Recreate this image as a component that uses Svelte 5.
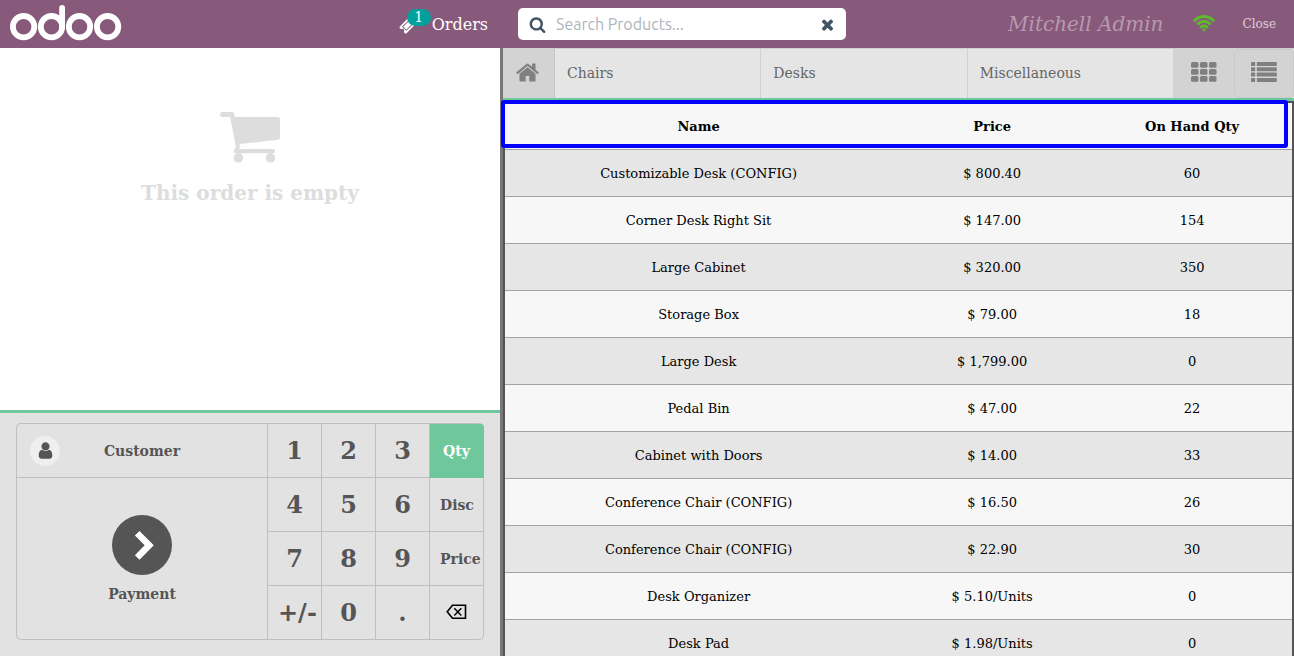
<script>
  const categories = ['Chairs', 'Desks', 'Miscellaneous'];
  const products = [
    ['Customizable Desk (CONFIG)', '$ 800.40', 60],
    ['Corner Desk Right Sit', '$ 147.00', 154],
    ['Large Cabinet', '$ 320.00', 350],
    ['Storage Box', '$ 79.00', 18],
    ['Large Desk', '$ 1,799.00', 0],
    ['Pedal Bin', '$ 47.00', 22],
    ['Cabinet with Doors', '$ 14.00', 33],
    ['Conference Chair (CONFIG)', '$ 16.50', 26],
    ['Conference Chair (CONFIG)', '$ 22.90', 30],
    ['Desk Organizer', '$ 5.10/Units', 0],
    ['Desk Pad', '$ 1.98/Units', 0]
  ];
  const keys = ['1', '2', '3', 'Qty', '4', '5', '6', 'Disc', '7', '8', '9', 'Price', '+/-', '0', '.', 'back'];
  const modes = ['Qty', 'Disc', 'Price'];
  let mode = $state('Qty');
  let search = $state('');
</script>

<div class="pos">
  <header>
    <div class="brand">
      <svg class="logo" width="112" height="38" viewBox="0 0 112 38" role="img" aria-label="odoo">
        <g fill="none" stroke="#fff" stroke-width="5.8" stroke-linecap="round">
          <circle cx="13.6" cy="21.7" r="10.7" /><circle cx="41.5" cy="21.7" r="10.7" />
          <circle cx="69.5" cy="21.7" r="10.7" /><circle cx="97.6" cy="21.7" r="10.7" />
          <path d="M52.1 3v18.7" />
        </g>
      </svg>
      <button class="orders">
        <span class="ticket">
          <svg width="17" height="17" viewBox="0 0 1792 1792" fill="#fff"><path d="M1024 452l316 316-572 572-316-316zm-211 979l618-618q19-19 19-45t-19-45l-362-362q-18-18-45-18t-45 18l-618 618q-19 19-19 45t19 45l362 362q18 18 45 18t45-18zm889-637l-907 908q-37 37-90.500 37t-90.500-37l-126-126q56-56 56-136t-56-136-136-56-136 56l-125-126q-37-37-37-90.500t37-90.500l907-906q37-37 90.500-37t90.500 37l125 125q-56 56-56 136t56 136 136 56 136-56l126 125q37 37 37 90.500t-37 90.500z" /></svg>
          <span class="badge">1</span>
        </span>
        Orders
      </button>
    </div>
    <div class="search">
      <svg width="17" height="17" viewBox="0 0 1792 1792" fill="#435363"><path d="M1216 832q0-185-131.500-316.500t-316.500-131.500-316.500 131.500-131.500 316.500 131.500 316.500 316.500 131.500 316.500-131.500 131.500-316.500zm512 832q0 52-38 90t-90 38q-54 0-90-38l-343-342q-179 124-399 124-143 0-273.500-55.500t-225-150-150-225-55.500-273.500 55.500-273.500 150-225 225-150 273.500-55.500 273.500 55.500 225 150 150 225 55.500 273.500q0 220-124 399l343 343q37 37 37 90z" /></svg>
      <input type="text" aria-label="Search Products" placeholder="Search Products..." bind:value={search} />
      <button aria-label="Clear search" onclick={() => (search = '')}>
        <svg width="17" height="17" viewBox="0 0 1792 1792" fill="#435363"><path d="M1490 1322q0 40-28 68l-136 136q-28 28-68 28t-68-28l-294-294-294 294q-28 28-68 28t-68-28l-136-136q-28-28-28-68t28-68l294-294-294-294q-28-28-28-68t28-68l136-136q28-28 68-28t68 28l294 294 294-294q28-28 68-28t68 28l136 136q28 28 28 68t-28 68l-294 294 294 294q28 28 28 68z" /></svg>
      </button>
    </div>
    <div class="status">
      <span class="user">Mitchell Admin</span>
      <svg width="22" height="17" viewBox="0 0 22 17" fill="none" stroke="#5fb92f" stroke-width="2.800">
        <path d="M.8 6.200Q5 1.500 11 1.500t10.200 4.700M4.200 9.700Q7 6.300 11 6.300t6.800 3.400M7.300 12.900Q9 11 11 11t3.700 1.900" />
        <path d="M8.800 14.200q2.200-1.600 4.400 0L11 16.700z" fill="#5fb92f" stroke="none" />
      </svg>
      <button class="close">Close</button>
    </div>
  </header>

  <main>
    <section class="left">
      <div class="order">
        <svg width="60" height="52" viewBox="0 0 60 52" fill="#ddd">
          <path d="M2.500 0H12q2 0 2.300 2l.6 3H58q2 0 2 2v18.500q0 2-2 2.200L19.500 32l.8 3-1.200 2H53q2.200 0 2.200 2.100T53 41.300H16q-2.200 0-2.200-2 0-1 2-4.500L10.200 5H2.500Q0 5 0 2.500T2.500 0z" />
          <circle cx="18.300" cy="45.800" r="4.800" /><circle cx="50.500" cy="45.800" r="4.800" />
        </svg>
        <h1>This order is empty</h1>
      </div>
      <div class="actions">
        <div class="pad">
          <button class="customer">
            <span class="avatar">
              <svg width="19" height="19" viewBox="0 0 1792 1792" fill="#555"><path d="M1536 1399q0 109-62.500 187t-150.500 78h-854q-88 0-150.500-78t-62.500-187q0-85 8.500-160.500t31.500-152 58.500-131 94-89 134.500-34.500q131 128 313 128t313-128q76 0 134.500 34.500t94 89 58.500 131 31.500 152 8.500 160.500zm-256-887q0 159-112.500 271.500t-271.500 112.500-271.500-112.500-112.500-271.500 112.500-271.500 271.500-112.500 271.500 112.500 112.500 271.500z" /></svg>
            </span>
            <span>Customer</span>
          </button>
          <button class="payment">
            <span class="arrow">
              <svg width="60" height="60" viewBox="0 0 60 60" fill="none" stroke="#fff" stroke-width="6.500"><path d="M25.200 18.200 37.200 30.300 25.200 42.500" /></svg>
            </span>
            <span>Payment</span>
          </button>
          <div class="keys">
            {#each keys as key}
              {#if modes.includes(key)}
                <button class="mode" class:selected={mode === key} onclick={() => (mode = key)}>{key}</button>
              {:else if key === 'back'}
                <button aria-label="Backspace">
                  <svg width="21" height="18" viewBox="0 0 21 18" fill="none" stroke="#000"><path stroke-width="1.600" d="M6.500 1.300h13v13h-13L1.200 7.800z" /><path stroke-width="1.500" d="m8.300 4.200 7 7.200m0-7.200-7 7.200" /></svg>
                </button>
              {:else}
                <button>{key}</button>
              {/if}
            {/each}
          </div>
        </div>
      </div>
    </section>

    <section class="right">
      <nav>
        <button class="home" aria-label="Home">
          <svg width="25" height="25" viewBox="0 0 1792 1792" fill="#808080"><path d="M1472 992v480q0 26-19 45t-45 19h-384v-384h-256v384h-384q-26 0-45-19t-19-45v-480q0-1 .5-3t.5-3l575-474 575 474q1 2 1 6zm223-69l-62 74q-8 9-21 11h-3q-13 0-21-7l-692-577-692 577q-12 8-24 7-13-2-21-11l-62-74q-8-10-7-23.500t11-21.500l719-599q32-26 76-26t76 26l244 204v-195q0-14 9-23t23-9h192q14 0 23 9t9 23v408l219 182q10 8 11 21.500t-7 23.500z" /></svg>
        </button>
        {#each categories as category}
          <button class="category">{category}</button>
        {/each}
        <button class="view" aria-label="Grid view">
          <svg width="26" height="20" viewBox="0 0 26 20" fill="#808080">
            {#each [0, 7, 14] as y}
              {#each [0, 9, 18] as x}<rect {x} {y} width="7.500" height="5.700" rx="1.500" />{/each}
            {/each}
          </svg>
        </button>
        <button class="view framed" aria-label="List view">
          <svg width="26" height="20" viewBox="0 0 26 20" fill="#808080">
            {#each [0, 5.3, 10.6, 15.9] as y}
              <rect x="0" {y} width="4.200" height="4" rx=".6" /><rect x="5.800" {y} width="20" height="4" rx=".6" />
            {/each}
          </svg>
        </button>
      </nav>
      <div class="list">
        <table>
          <thead>
            <tr><th class="name">Name</th><th>Price</th><th>On Hand Qty</th></tr>
          </thead>
          <tbody>
            {#each products as [name, price, quantity]}
              <tr><td>{name}</td><td>{price}</td><td>{quantity}</td></tr>
            {/each}
          </tbody>
        </table>
        <div class="highlight"></div>
      </div>
    </section>
  </main>
</div>

<style>
  :global(body) { margin: 0; }
  .pos, .pos * { box-sizing: border-box; }
  .pos {
    display: flex;
    flex-direction: column;
    height: 100vh;
    overflow: hidden;
    font-family: "DejaVu Serif", serif;
    font-size: 14px;
    color: #555;
  }
  button { border: 0; padding: 0; background: none; font: inherit; color: inherit; cursor: pointer; }
  svg { display: block; flex: none; }

  header { display: flex; align-items: center; flex: none; height: 48px; background: #875a7b; }
  .brand { display: flex; justify-content: space-between; width: 518px; padding: 0 30px 0 10px; }
  .orders { display: flex; align-items: center; gap: 16px; font-size: 16px; color: #fff; }
  .ticket { position: relative; padding-top: 3px; }
  .badge {
    position: absolute; left: 8px; top: -5px; width: 24px; height: 17px;
    border-radius: 9px; background: #00a09d; font-size: 14px; line-height: 17px; text-align: center;
  }
  .search { display: flex; align-items: center; gap: 10px; width: 328px; height: 32px; padding: 0 10px 0 11px; border-radius: 5px; background: #fff; }
  .search input { flex: 1; min-width: 0; padding: 0; border: 0; outline: 0; background: none; font: 16px/20px Ubuntu, "Noto Sans", sans-serif; color: #435363; }
  .search input::placeholder { color: #adb5bd; opacity: 1; }
  .status { display: flex; align-items: center; margin-left: auto; padding-right: 18px; }
  .user { margin-right: 30px; font-size: 20px; font-style: italic; color: #b799af; }
  .status svg { margin-bottom: 2px; }
  .close { margin-left: 27px; font-size: 12px; color: #dccfd8; }

  main { display: flex; flex: 1; min-height: 0; }
  .left { display: flex; flex-direction: column; flex: 0 0 503px; border-right: 3px solid #777; background: #fff; }
  .order { flex: 1; display: flex; flex-direction: column; align-items: center; gap: 17px; padding-top: 64px; }
  h1 { margin: 0; font-size: 20px; line-height: 24px; color: #ddd; }
  .actions { padding: 10px 16px 16px; border-top: 3px solid #6ec89b; background: #e2e2e2; }
  .pad {
    display: grid; grid-template-columns: 1fr 216px; grid-template-rows: 54px 162px;
    border: solid #bfbfbf; border-width: 1px 0 0 1px; border-radius: 5px; font-weight: bold;
  }
  .pad button { border: solid #bfbfbf; border-width: 0 1px 1px 0; }
  .customer { display: flex; align-items: center; padding: 0 13px; }
  .customer > span:last-child { flex: 1; padding-right: 30px; text-align: center; }
  .avatar { display: grid; place-items: center; width: 30px; height: 30px; border-radius: 50%; background: #efefef; }
  .payment { grid-row: 2; display: flex; flex-direction: column; align-items: center; justify-content: center; gap: 11px; border-bottom-left-radius: 5px; }
  .arrow { border-radius: 50%; background: #555; }
  .keys { grid-area: 1 / 2 / 3 / 3; display: grid; grid-template-columns: repeat(4, 54px); grid-template-rows: repeat(4, 54px); }
  .keys button { padding: 0 10px; font-size: 24px; text-align: center; white-space: nowrap; }
  .keys .mode { font-size: 14px; }
  .keys button svg { margin: 0 auto; }
  .keys .selected { border-color: #6ec89b; border-top-right-radius: 4px; background: #6ec89b; color: #fff; }
  .keys button:last-child { border-bottom-right-radius: 5px; }

  .right { display: flex; flex-direction: column; flex: 1; min-width: 0; }
  nav { display: flex; flex: none; height: 53px; border-top: 1px solid #d0d0d0; border-bottom: 3px solid #6ec89b; background: #e5e5e5; }
  .home { display: grid; place-items: center; width: 52px; padding: 0 3px 2px 0; border-right: 1px solid #c6c6c6; background: #d3d3d3; }
  .category { flex: 1; padding: 0 12px 2px; border-right: 1px solid #d0d0d0; text-align: left; color: #666; }
  .category:nth-child(4) { border-right: 0; }
  .view { display: grid; place-items: center; width: 61px; padding: 0 0 4px 2px; background: #d3d3d3; }
  .framed { width: 60px; padding: 0 0 3px; border: 1px solid #cacaca; border-radius: 3px; }

  .list { position: relative; flex: 1; min-height: 0; }
  table { width: 100%; table-layout: fixed; border: 2px solid #555; border-collapse: separate; border-spacing: 0; font-size: 13px; color: #000; }
  th, td { height: 47px; padding: 0; border-bottom: 1px solid #a3a3a3; text-align: center; }
  .name { width: 49.2%; }
  tr { background: #f7f7f7; }
  tbody tr:nth-child(odd) { background: #e6e6e6; }
  .highlight { position: absolute; top: -1px; left: -2px; right: 6px; height: 48px; border: 4px solid #00f; border-radius: 3px; pointer-events: none; }
</style>
